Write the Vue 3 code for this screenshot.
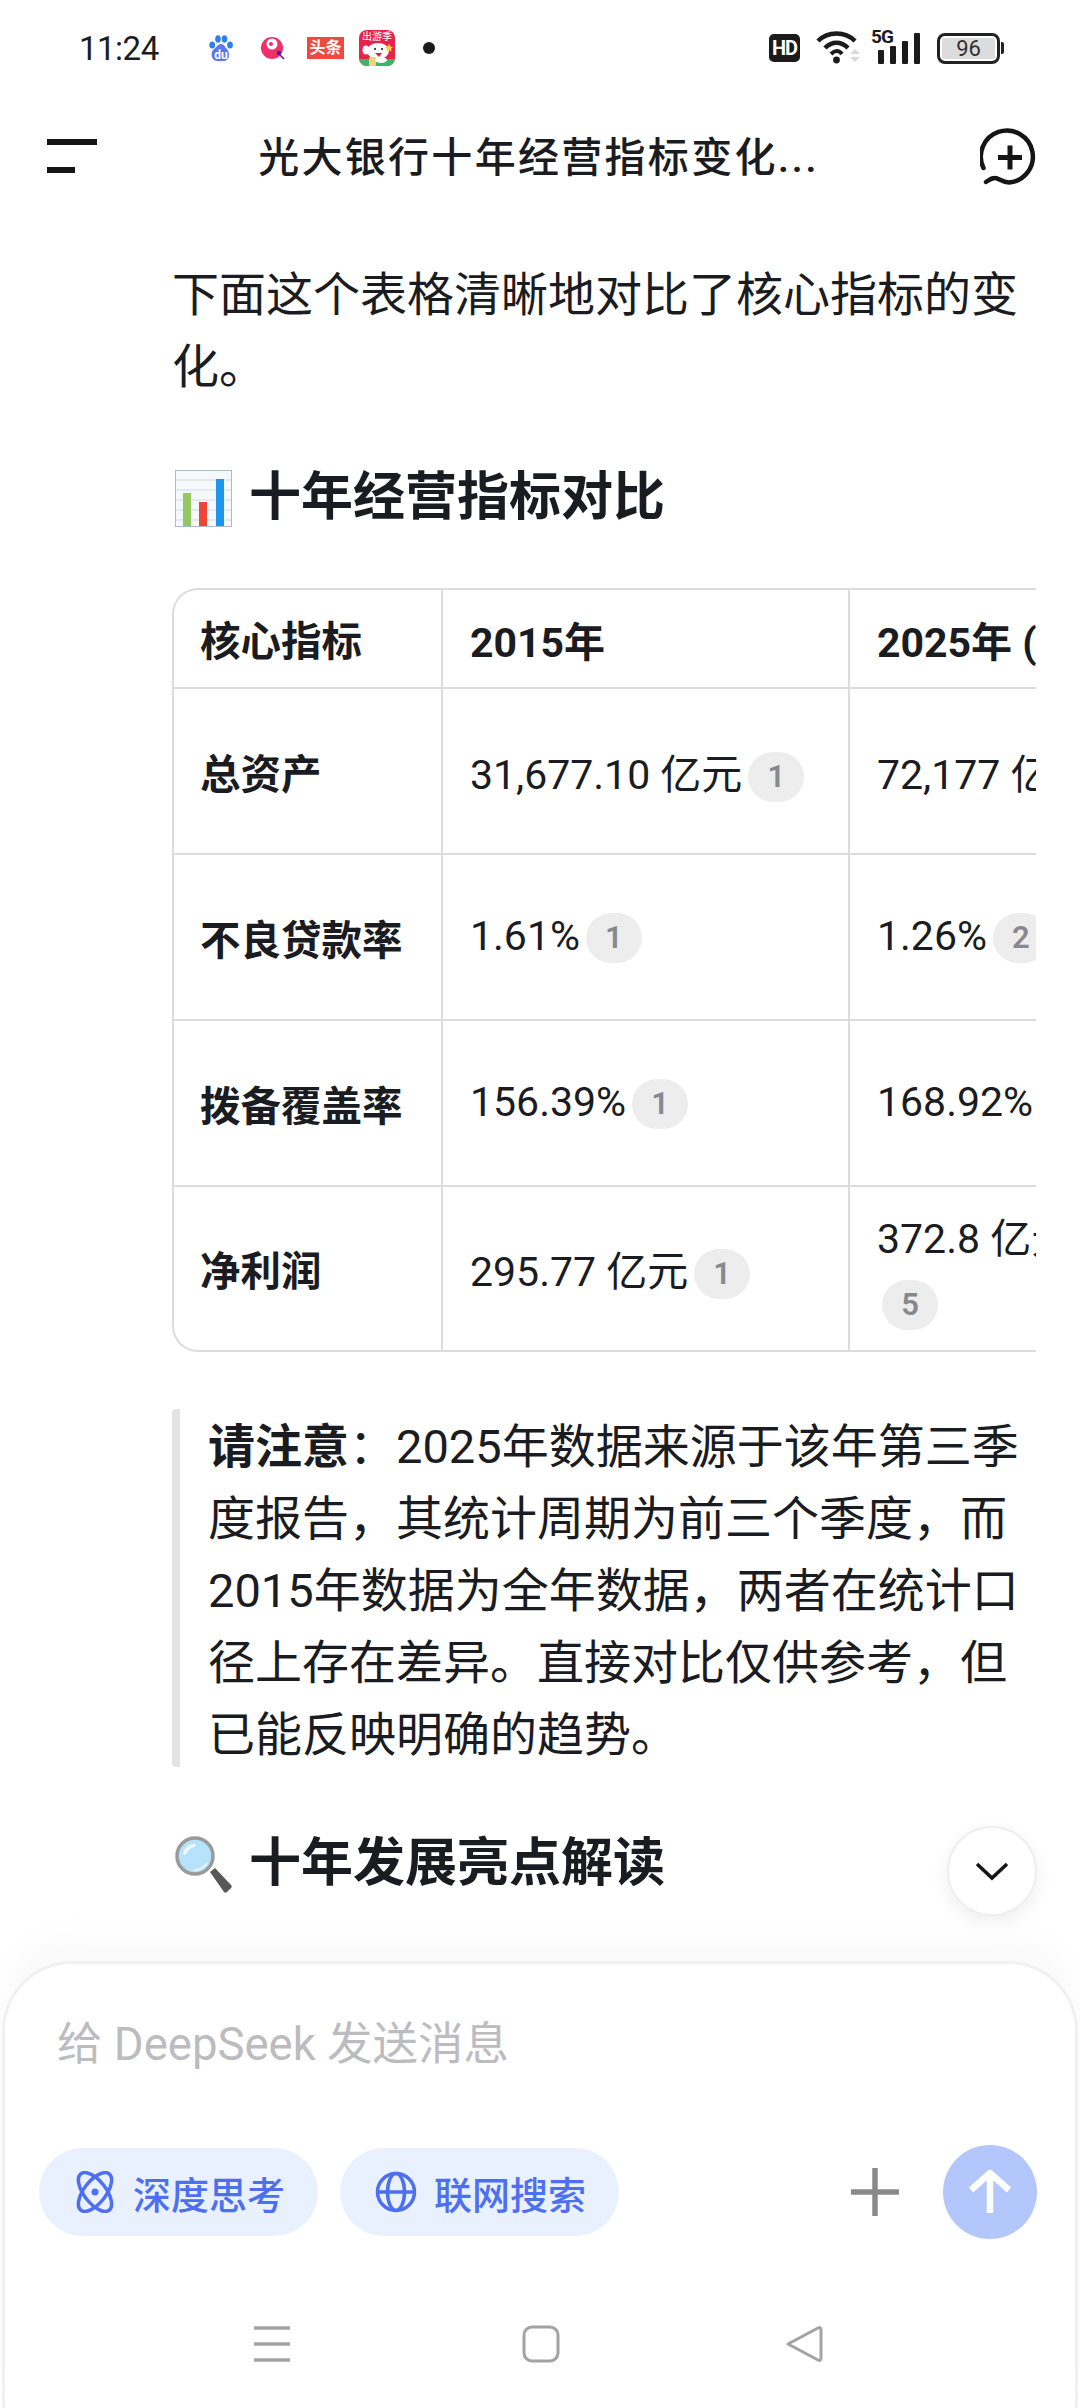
<script setup>
const rows = [
  { name: '总资产', a: '31,677.10 亿元', an: 1, b: '72,177 亿元', bn: 1, wrap: false },
  { name: '不良贷款率', a: '1.61%', an: 1, b: '1.26%', bn: 2, wrap: false },
  { name: '拨备覆盖率', a: '156.39%', an: 1, b: '168.92%', bn: 3, wrap: false },
  { name: '净利润', a: '295.77 亿元', an: 1, b: '372.8 亿元', bn: 5, wrap: true }
]
</script>

<template>
  <div class="page">
    <div class="status">
      <div class="status-left">
        <span class="time">11:24</span>
        <svg class="ic-baidu" width="24" height="26" viewBox="0 0 24 26">
          <ellipse cx="3.2" cy="10" rx="2.9" ry="3.6" fill="#2f80ed" />
          <ellipse cx="9" cy="4" rx="2.8" ry="3.7" fill="#2f80ed" />
          <ellipse cx="15.5" cy="4" rx="2.8" ry="3.7" fill="#2f80ed" />
          <ellipse cx="21" cy="10" rx="2.9" ry="3.6" fill="#2f80ed" />
          <path d="M12 9c3 0 4 3 6 5 3 3 3 12-3 12H8C2 26 1 17 5 14c3-2 4-5 7-5z" fill="#5a78ee" />
          <text x="12" y="24" text-anchor="middle" class="du">du</text>
        </svg>
        <svg class="ic-red" width="24" height="24" viewBox="0 0 24 24">
          <circle cx="11" cy="12" r="11" fill="#f0306a" />
          <circle cx="11" cy="8" r="5.5" fill="#fff" />
          <circle cx="10" cy="8" r="2" fill="#f0306a" />
          <circle cx="18" cy="17" r="2.2" fill="#5a1a96" />
          <path d="M19 19l4 4" stroke="#5a1a96" stroke-width="1.6" />
        </svg>
        <span class="toutiao">头条</span>
        <div class="ic-app">
          <span class="app-label">出游季</span>
          <svg class="app-dog" width="36" height="24" viewBox="0 0 36 24">
            <rect x="0" y="17" width="36" height="7" fill="#3fb56b" />
            <ellipse cx="19" cy="9" rx="11" ry="8" fill="#fff" />
            <ellipse cx="7" cy="8" rx="3.500" ry="4.500" fill="#fff" />
            <circle cx="16" cy="7" r="1.100" fill="#222" />
            <circle cx="23" cy="7" r="1.100" fill="#222" />
            <path d="M16 11h7l-3 4z" fill="#d7263d" />
            <path d="M30 2l1.500 2.500 2.500.5-2 2 .5 2.500-2.500-1.200-2.500 1.200.5-2.500-2-2 2.500-.5z" fill="#ffd23c" />
            <rect x="10" y="15" width="7" height="9" rx="1" fill="#f3d27a" />
            <ellipse cx="22" cy="18" rx="6" ry="3" fill="#fff" />
          </svg>
        </div>
        <span class="dot"></span>
      </div>
      <div class="status-right">
        <span class="hd">HD</span>
        <svg class="wifi" width="44" height="34" viewBox="0 0 44 34">
          <path d="M2 11C12 1 29 1 39 11" fill="none" stroke="#1b1b1b" stroke-width="4.500" />
          <path d="M9 18c7-7 16-7 23 0" fill="none" stroke="#1b1b1b" stroke-width="4.500" />
          <path d="M15 24c4-4 8-4 11 0" fill="none" stroke="#1b1b1b" stroke-width="4" />
          <circle cx="20.500" cy="30" r="3.400" fill="#1b1b1b" />
          <path d="M34 24l5-5 5 5zM34 27h10l-5 5z" fill="#d9d9d9" />
        </svg>
        <div class="signal">
          <span class="fiveg">5G</span>
          <svg width="43" height="31" viewBox="0 0 43 31">
            <rect x="1" y="17" width="6" height="14" rx="1" fill="#1b1b1b" />
            <rect x="13" y="13" width="6" height="18" rx="1" fill="#1b1b1b" />
            <rect x="25" y="8" width="6" height="23" rx="1" fill="#1b1b1b" />
            <rect x="37" y="0" width="6" height="31" rx="1" fill="#1b1b1b" />
          </svg>
        </div>
        <div class="battery">
          <div class="battery-body"><span class="battery-num">96</span></div>
          <span class="battery-nub"></span>
        </div>
      </div>
    </div>

    <div class="header">
      <div class="menu-icon"><span class="m1"></span><span class="m2"></span></div>
      <div class="title">光大银行十年经营指标变化...</div>
      <svg class="new-chat" width="60" height="60" viewBox="0 0 60 60">
        <path d="M3.500 41A26 26 0 1 1 29 55.500C22 55.500 19 51 15 51 11 51 9 53 6 55" fill="none" stroke="#151515" stroke-width="4.500" stroke-linecap="round" />
        <path d="M30 18.500v24M18 30.500h24" stroke="#151515" stroke-width="5" />
      </svg>
    </div>

    <div class="content">
      <p class="para">下面这个表格清晰地对比了核心指标的变化。</p>
      <h2 class="head head-first">
        <svg class="emoji" width="57" height="57" viewBox="0 0 57 57">
          <rect x="0.500" y="0.500" width="56" height="56" fill="#f6f9fb" stroke="#a9bcc9" />
          <path d="M1 10h55M1 20h55M1 30h55M1 40h55M1 50h55" stroke="#cfdbe3" stroke-width="1" />
          <rect x="8" y="23" width="8" height="33" fill="#93c760" />
          <rect x="24" y="32" width="8" height="24" fill="#ef4536" />
          <rect x="41" y="9" width="8" height="47" fill="#1e95e8" />
        </svg>
        <span>十年经营指标对比</span>
      </h2>

      <div class="table-wrap">
        <table class="table">
          <thead>
            <tr class="row-head">
              <th class="c1">核心指标</th>
              <th class="c2">2015年</th>
              <th class="c3">2025年 (第三季度)</th>
            </tr>
          </thead>
          <tbody>
            <tr v-for="r in rows" :key="r.name" class="row">
              <th class="c1">{{ r.name }}</th>
              <td class="c2">{{ r.a }}<span class="badge">{{ r.an }}</span></td>
              <td class="c3">
                <div v-if="r.wrap" class="cell-stack">
                  <div class="cell-line">{{ r.b }}（前三季度）</div>
                  <span class="badge badge-block">{{ r.bn }}</span>
                </div>
                <template v-else>{{ r.b }}<span class="badge">{{ r.bn }}</span></template>
              </td>
            </tr>
          </tbody>
        </table>
      </div>

      <blockquote class="quote"><strong>请注意</strong>：2025年数据来源于该年第三季度报告，其统计周期为前三个季度，而2015年数据为全年数据，两者在统计口径上存在差异。直接对比仅供参考，但已能反映明确的趋势。</blockquote>

      <h2 class="head head-second">
        <svg class="emoji" width="57" height="57" viewBox="0 0 57 57">
          <path d="M35 36l5-4 16 17c1 1 1 2 0 3l-4 4c-1 1-2 1-3 0z" fill="#585858" />
          <circle cx="20" cy="20" r="18" fill="#b6e2fb" stroke="#9a9a9a" stroke-width="3.500" />
          <path d="M8 17c2-6 7-9 12-9 2 0 1 3-1 3-4 1-6 3-8 7-1 1-3 1-3-1z" fill="#fff" opacity=".8" />
          <path d="M19 34c5 0 10-2 13-7" stroke="#e6f6ff" stroke-width="2" fill="none" />
        </svg>
        <span>十年发展亮点解读</span>
      </h2>
    </div>

    <button class="float-btn">
      <svg width="34" height="20" viewBox="0 0 34 20">
        <path d="M2 3l15 14L32 3" fill="none" stroke="#151515" stroke-width="3.500" />
      </svg>
    </button>

    <div class="composer">
      <div class="placeholder">给 DeepSeek 发送消息</div>
      <div class="toolbar">
        <div class="pill">
          <svg width="42" height="42" viewBox="0 0 42 42">
            <g fill="none" stroke="#4d6ff0" stroke-width="3.500">
              <ellipse cx="21" cy="21" rx="11" ry="23" transform="rotate(-38 21 21)" />
              <ellipse cx="21" cy="21" rx="11" ry="23" transform="rotate(38 21 21)" />
            </g>
            <circle cx="21" cy="21" r="3.500" fill="#4d6ff0" />
          </svg>
          <span>深度思考</span>
        </div>
        <div class="pill">
          <svg width="42" height="42" viewBox="0 0 42 42">
            <g fill="none" stroke="#4d6ff0" stroke-width="3.500">
              <circle cx="21" cy="21" r="18.500" />
              <ellipse cx="21" cy="21" rx="8.500" ry="18.500" />
              <path d="M2.500 21h37" />
            </g>
          </svg>
          <span>联网搜索</span>
        </div>
        <div class="actions">
          <svg width="50" height="50" viewBox="0 0 50 50">
            <path d="M25 1v48M1 25h48" stroke="#8a8a8a" stroke-width="5.500" />
          </svg>
          <div class="send">
            <svg width="44" height="44" viewBox="0 0 44 44">
              <path d="M22 43V4M3 20L22 3l19 17" fill="none" stroke="#fff" stroke-width="6.500" />
            </svg>
          </div>
        </div>
      </div>
      <div class="nav">
        <svg width="38" height="38" viewBox="0 0 38 38">
          <path d="M1 3h36M1 19h36M1 35h36" stroke="#a3a3a3" stroke-width="3.500" />
        </svg>
        <svg width="38" height="38" viewBox="0 0 38 38">
          <rect x="2" y="2" width="34" height="34" rx="8" fill="none" stroke="#a3a3a3" stroke-width="3" />
        </svg>
        <svg class="nav-back" width="38" height="38" viewBox="0 0 38 38">
          <path d="M3 19L33 3c2-1 3 0 3 2v28c0 2-1 3-3 2z" fill="none" stroke="#a3a3a3" stroke-width="3" stroke-linejoin="round" />
        </svg>
      </div>
    </div>
  </div>
</template>

<style>
html, body { margin: 0; background: #fff; }
</style>

<style scoped>
* { box-sizing: border-box; }
.page {
  position: relative;
  width: 1080px;
  height: 2408px;
  overflow: hidden;
  display: flex;
  flex-direction: column;
  background: #fff;
  color: #1a1c21;
  font-family: Roboto, "Noto Sans CJK SC", sans-serif;
}
.status {
  height: 88px;
  flex: none;
  padding: 8px 76px 0 79px;
  display: flex;
  align-items: center;
  justify-content: space-between;
}
.status-left, .status-right { display: flex; align-items: center; height: 36px; }
.time { font-size: 33px; width: 130px; color: #1d1d1d; letter-spacing: -0.5px; }
.ic-baidu { margin-right: 28px; }
.du { font: 700 12px Roboto, sans-serif; fill: #fff; }
.ic-red { margin-right: 22px; }
.toutiao {
  width: 37px;
  height: 22px;
  background: #f0483e;
  color: #fff;
  font-size: 16px;
  line-height: 22px;
  text-align: center;
  font-weight: 700;
  margin-right: 15px;
}
.ic-app {
  position: relative;
  width: 36px;
  height: 36px;
  border-radius: 8px;
  background: #e8234a;
  overflow: hidden;
  margin-right: 28px;
}
.app-label {
  display: block;
  color: #fff;
  font-size: 10px;
  line-height: 14px;
  text-align: center;
}
.app-dog { position: absolute; left: 0; bottom: 0; }
.dot { width: 12px; height: 12px; border-radius: 50%; background: #1b1b1b; }
.hd {
  width: 31px;
  height: 28px;
  background: #1b1b1b;
  color: #fff;
  border-radius: 5px;
  font-size: 20px;
  line-height: 28px;
  font-weight: 700;
  text-align: center;
  letter-spacing: -1px;
  margin-right: 16px;
}
.wifi { margin-right: 14px; margin-top: -3px; }
.signal { position: relative; width: 46px; height: 31px; margin-right: 17px; display: flex; justify-content: flex-end; }
.fiveg {
  position: absolute;
  left: -3px;
  top: -4px;
  font-size: 19px;
  line-height: 15px;
  font-weight: 700;
  letter-spacing: -1px;
  color: #1b1b1b;
}
.battery { display: flex; align-items: center; }
.battery-body {
  width: 63px;
  height: 31px;
  border: 3px solid #222;
  border-radius: 8px;
  padding: 2px;
  display: flex;
}
.battery-num {
  flex: 1;
  background: #dcdcdc;
  border-radius: 2px;
  font-size: 22px;
  line-height: 21px;
  text-align: center;
  color: #333;
}
.battery-nub { width: 3px; height: 12px; background: #222; margin-left: 1px; border-radius: 0 2px 2px 0; }

.header {
  height: 140px;
  flex: none;
  display: flex;
  align-items: center;
  padding: 0 40px 0 47px;
  justify-content: space-between;
}
.menu-icon { width: 50px; display: flex; flex-direction: column; gap: 22px; margin-top: -4px; }
.m1, .m2 { display: block; height: 6px; background: #151515; }
.m1 { width: 50px; }
.m2 { width: 28px; }
.title { font-size: 41px; letter-spacing: 2.3px; line-height: 56px; color: #1a1c21; font-weight: 500; }
.new-chat { margin-top: -2px; }

.content { flex: 1; min-height: 0; overflow: hidden; padding: 31px 44px 0 172px; }
.para { margin: 0; font-size: 47px; line-height: 72px; }
.head {
  margin: 0;
  display: flex;
  align-items: center;
  gap: 17px;
  padding-left: 3px;
  font-size: 52px;
  line-height: 72px;
  font-weight: 700;
}
.head-first { margin-top: 59px; }
.head-second { margin-top: 61px; }
.emoji { flex: none; }
.table-wrap {
  margin-top: 54px;
  width: 864px;
  overflow: hidden;
  border: 2px solid #dcdcdc;
  border-right: none;
  border-radius: 26px 0 0 26px;
}
.table {
  border-collapse: collapse;
  table-layout: fixed;
  width: 1100px;
  font-size: 41px;
}
.c1 { width: 268px; padding: 0 26px; text-align: left; font-weight: 700; font-size: 40.500px; }
.c2 { width: 407px; padding: 0 27px; text-align: left; }
.c3 { width: 425px; padding: 0 27px; text-align: left; white-space: nowrap; }
.row-head { height: 98px; }
.row-head .c2, .row-head .c3 { font-weight: 700; font-size: 41px; }
.row { height: 166px; border-top: 2px solid #dcdcdc; }
.row:last-child { height: 164px; }
.table .c2 { border-left: 2px solid #dcdcdc; }
.table .c3 { border-left: 2px solid #dcdcdc; }
.table td { font-weight: 400; }
.badge {
  display: inline-block;
  width: 56px;
  height: 50px;
  margin-left: 6px;
  border-radius: 25px;
  background: #ededed;
  color: #87898f;
  font-size: 31px;
  font-weight: 600;
  line-height: 50px;
  text-align: center;
  vertical-align: 2px;
}
.cell-stack { padding-top: 3px; }
.cell-line { line-height: 56px; }
.badge-block { display: block; margin: 13px 0 0 5px; }
.quote {
  margin: 57px 0 0;
  height: 358px;
  border-left: 8px solid #e3e3e3;
  border-radius: 4px;
  padding: 2px 0 0 28px;
  font-size: 47px;
  line-height: 72px;
  width: 851px;
}
.quote strong { font-weight: 700; }

.float-btn {
  position: absolute;
  left: 947px;
  top: 1826px;
  width: 90px;
  height: 90px;
  border-radius: 50%;
  background: #fff;
  border: 2px solid #efefef;
  box-shadow: 0 6px 18px rgba(0, 0, 0, 0.07);
  display: flex;
  align-items: center;
  justify-content: center;
  padding: 0;
}

.composer {
  flex: none;
  height: 447px;
  margin: 0 2px;
  background: #fff;
  border: 3px solid #f1f1f1;
  border-bottom: none;
  border-radius: 70px 70px 0 0;
  box-shadow: 0 -24px 30px rgba(250, 250, 250, 0.9);
  position: relative;
  display: flex;
  flex-direction: column;
}
.placeholder {
  height: 162px;
  flex: none;
  padding-left: 52px;
  font-size: 45.500px;
  line-height: 162px;
  color: #bcbcc0;
}
.toolbar {
  margin-top: 19px;
  padding: 0 38px 0 34px;
  display: flex;
  align-items: center;
  gap: 22px;
}
.pill {
  width: 279px;
  height: 88px;
  border-radius: 44px;
  background: #e9f0fe;
  color: #4d6ff0;
  display: flex;
  align-items: center;
  gap: 17px;
  padding-left: 35px;
  font-size: 38px;
  font-weight: 500;
}
.actions { margin-left: auto; display: flex; align-items: center; gap: 43px; }
.send {
  width: 94px;
  height: 94px;
  border-radius: 50%;
  background: #b3c7fc;
  display: flex;
  align-items: center;
  justify-content: center;
}
.nav {
  margin-top: 40px;
  flex: 1;
  display: flex;
  align-items: center;
  padding: 0 0 0 248px;
  gap: 231px;
}
.nav-back { margin-left: -6px; }
</style>
